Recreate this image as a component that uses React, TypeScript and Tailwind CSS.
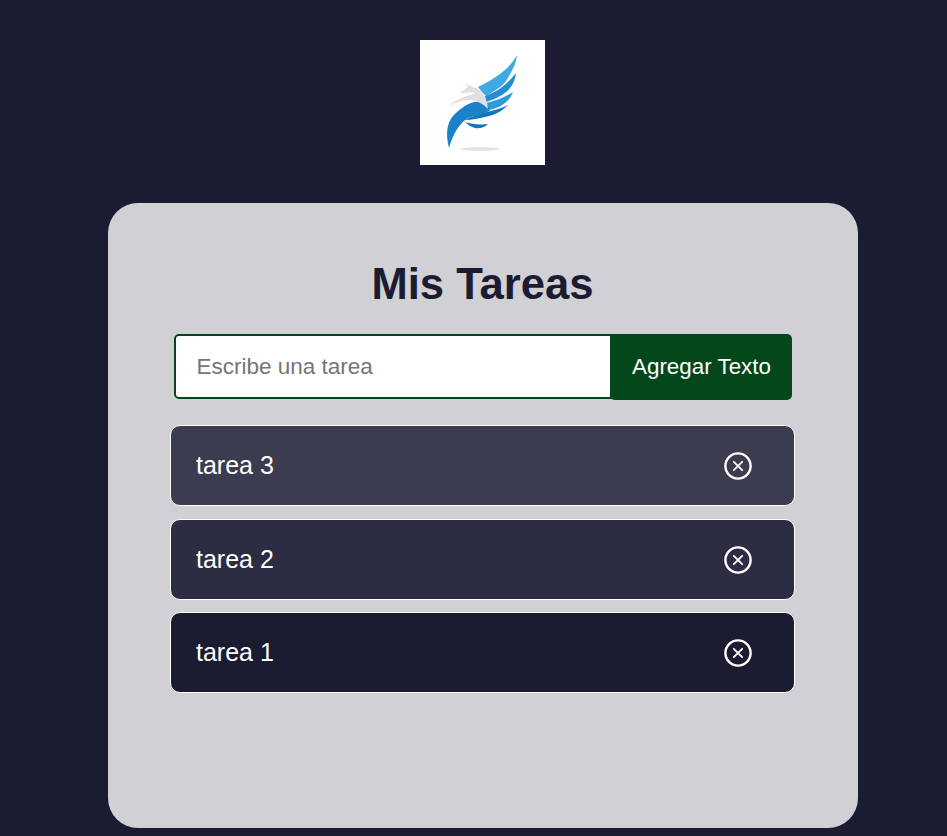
import { useState } from "react";

function XIcon() {
  return (
    <svg width="28" height="28" viewBox="0 0 28 28" fill="none" stroke="white" strokeLinecap="round">
      <circle cx="14" cy="14" r="12.6" strokeWidth="2.4" />
      <path d="M9.8 9.8 18.2 18.2M18.2 9.8 9.8 18.2" strokeWidth="1.8" />
    </svg>
  );
}

function Logo() {
  return (
    <svg width="125" height="125" viewBox="0 0 125 125" className="block shrink-0">
      <rect width="125" height="125" fill="#fff" />
      <ellipse cx="60" cy="109" rx="20" ry="1.8" fill="#e2e2e4" />
      <path d="M97 15C90 28 78 37 58 47L62 52L66 56C76 50 84 46 88 38C92 31 96 24 97 15Z" fill="#3ea9e2" />
      <path d="M65 56C76 52 86 46 96 33C95 43 90 50 82 55C77 58 72 60 66 62Z" fill="#1f8fd2" />
      <path d="M66 63C76 61 85 57 93 52C90 60 84 65 76 68C73 69 70 70 67 70Z" fill="#2d9bdb" />
      <path d="M62 73C72 71 80 69 88 65C83 70 77 74 69 76C61 78 52 80 45 80C51 77 56 75 62 73Z" fill="#1276bc" />
      <path d="M29 108C25 92 27 80 37 72C46 64 58 58 67 64L70 71C60 75 50 76 44 81C37 87 32 97 29 108Z" fill="#1b82c8" />
      <path d="M45 82C51 84 60 85 68 84C64 88 59 89 55 88C51 87 48 85 45 82Z" fill="#1276bc" />
      <path d="M45 43C50 46 54 47 58 49C63 52 67 58 68 69C63 63 55 60 47 60C40 61 34 63 29 66C34 61 41 58 47 56C51 55 54 54 55 53C50 52 45 53 40 53C43 50 47 48 48 47C47 46 46 44 45 43Z" fill="#dfe0e4" />
    </svg>
  );
}

export default function App() {
  const [text, setText] = useState("");
  const tasks = [
    { name: "tarea 3", bg: "bg-[#3c3c50]", extra: "" },
    { name: "tarea 2", bg: "bg-[#2c2c43]", extra: "" },
    { name: "tarea 1", bg: "bg-[#1b1b32]", extra: "-mt-px" },
  ];
  return (
    <div className="bg-[#1b1b32] flex flex-col items-center pt-10 pl-[18px] font-['Liberation_Sans',Arial,sans-serif] overflow-hidden h-[836px]">
      <Logo />
      <main className="mt-[38px] w-[750px] h-[625px] shrink-0 rounded-[30px] bg-[#d1d0d5] flex flex-col items-center pt-[56px]">
        <h1 className="text-[43.6px] leading-[50px] font-bold text-[#1b1b32]">Mis Tareas</h1>
        <form className="mt-[25px] flex items-start w-[618px]" onSubmit={(e) => e.preventDefault()}>
          <input
            value={text}
            onChange={(e) => setText(e.target.value)}
            placeholder="Escribe una tarea"
            className="w-[438px] h-[65px] bg-white border-2 border-[#03471a] rounded-l-[5px] pl-[21px] pr-2 text-[22.5px] text-black outline-none placeholder:text-[#757575]"
          />
          <button className="w-[180px] h-[66px] bg-[#03471a] text-white text-[22.4px] rounded-r-[5px] rounded-bl-[2px]">
            Agregar Texto
          </button>
        </form>
        <ul className="mt-[25px] w-[625px] flex flex-col gap-[13px]">
          {tasks.map((t) => (
            <li
              key={t.name}
              className={`${t.bg} ${t.extra} h-[81px] border border-white rounded-[10px] flex items-center justify-between pl-[25px] pr-[42px] text-white text-[25px]`}
            >
              <span>{t.name}</span>
              <XIcon />
            </li>
          ))}
        </ul>
      </main>
    </div>
  );
}
